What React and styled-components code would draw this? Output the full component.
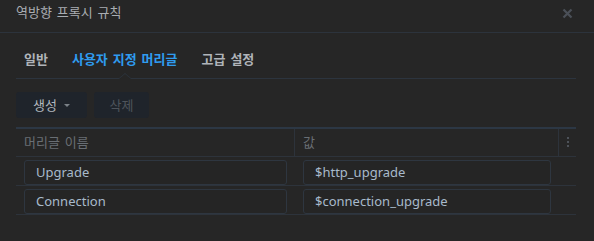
import React, { useState } from 'react';
import styled, { createGlobalStyle } from 'styled-components';

const GlobalStyle = createGlobalStyle`
  html, body {
    margin: 0;
    padding: 0;
    background: #262626;
  }
  body {
    font-family: "Noto Sans CJK KR", "Noto Sans", sans-serif;
    -webkit-font-smoothing: antialiased;
  }
  * { box-sizing: border-box; }
`;

const Dialog = styled.div`
  width: 594px;
  height: 241px;
  background: #262626;
  display: flex;
  flex-direction: column;
`;

const Header = styled.div`
  height: 33px;
  display: flex;
  justify-content: space-between;
  align-items: flex-start;
  padding: 3px 21px 0 16px;
  border-bottom: 1px solid #2c333c;
`;

const Title = styled.div`
  font-size: 13px;
  line-height: 18px;
  word-spacing: 2px;
  color: #a9adb2;
`;

const CloseButton = styled.button`
  border: 0;
  background: transparent;
  padding: 0;
  margin-top: 5px;
  width: 11px;
  height: 11px;
  display: flex;
  cursor: pointer;
`;

const Body = styled.div`
  padding: 0 18px 0 16px;
  display: flex;
  flex-direction: column;
`;

const TabBar = styled.div`
  height: 46px;
  display: flex;
  align-items: flex-end;
  padding-left: 8px;
  gap: 24px;
  border-bottom: 1px solid #2c343e;
`;

const Tab = styled.div`
  position: relative;
  font-size: 13px;
  font-weight: 700;
  line-height: 18px;
  word-spacing: 2px;
  padding-bottom: 10px;
  color: ${(p) => (p.active ? '#2f9cf0' : '#b0b4b9')};
  cursor: pointer;

  ${(p) => p.active && `
    &::before, &::after {
      content: '';
      position: absolute;
      left: 50%;
      width: 0;
      height: 0;
      border-style: solid;
      transform: translateX(-50%);
    }
    &::before {
      bottom: -1px;
      border-width: 0 7px 6px 7px;
      border-color: transparent transparent #2c343e transparent;
    }
    &::after {
      bottom: -1px;
      border-width: 0 6px 5px 6px;
      border-color: transparent transparent #262626 transparent;
    }
  `}
`;

const Toolbar = styled.div`
  display: flex;
  gap: 7px;
  margin-top: 13px;
`;

const ToolButton = styled.button`
  height: 26px;
  width: ${(p) => p.w}px;
  border: 0;
  border-radius: 3px;
  background: #1f242b;
  color: ${(p) => (p.disabled ? '#4e545b' : '#b2b8be')};
  font-family: inherit;
  font-size: 13px;
  display: flex;
  align-items: center;
  justify-content: center;
  gap: 7px;
  padding: 0 0 1px 0;
  cursor: ${(p) => (p.disabled ? 'default' : 'pointer')};
`;

const Caret = styled.span`
  width: 0;
  height: 0;
  border-style: solid;
  border-width: 3px 3px 0 3px;
  border-color: #7b8187 transparent transparent transparent;
  margin-top: 2px;
`;

const Table = styled.div`
  margin-top: 9px;
  border-top: 2px solid #2c3744;
  width: 560px;
`;

const Row = styled.div`
  display: grid;
  grid-template-columns: 279px 264px 17px;
  height: ${(p) => (p.head ? 28 : 29)}px;
  border-bottom: 1px solid #2d333b;
`;

const HeadCell = styled.div`
  display: flex;
  align-items: center;
  padding-left: 8px;
  padding-bottom: 2px;
  font-size: 13px;
  word-spacing: 2px;
  color: #696e74;
  border-right: 1px solid #2d333b;
`;

const Cell = styled.div`
  padding: 1px 8px 0 8px;
`;

const TextInput = styled.input`
  width: 100%;
  height: 25px;
  border: 1px solid #2e3640;
  border-radius: 3px;
  background: #252525;
  color: #a8bacb;
  font-family: "Noto Sans", sans-serif;
  font-size: 13px;
  padding: 0 0 1px 11px;
  outline: none;
`;

const Kebab = styled.div`
  display: flex;
  flex-direction: column;
  align-items: center;
  justify-content: center;
  gap: 2px;
  padding-bottom: 2px;
  span {
    width: 2px;
    height: 2px;
    background: #4d5259;
  }
`;

const headers = [
  { key: 'Upgrade', value: '$http_upgrade' },
  { key: 'Connection', value: '$connection_upgrade' },
];

const tabs = ['일반', '사용자 지정 머리글', '고급 설정'];

const App = () => {
  const [activeTab, setActiveTab] = useState(1);
  const [rows, setRows] = useState(headers);

  const updateRow = (index, field, val) => {
    const next = rows.map((r, i) => (i === index ? { ...r, [field]: val } : r));
    setRows(next);
  };

  return (
    <>
      <GlobalStyle />
      <Dialog>
        <Header>
          <Title>역방향 프록시 규칙</Title>
          <CloseButton aria-label="close">
            <svg width="11" height="11" viewBox="0 0 11 11">
              <path d="M1.5 1.5 L9.5 9.5 M9.5 1.5 L1.5 9.5" stroke="#4b5058" strokeWidth="2.2" />
            </svg>
          </CloseButton>
        </Header>
        <Body>
          <TabBar>
            {tabs.map((t, i) => (
              <Tab key={t} active={activeTab === i} onClick={() => setActiveTab(i)}>
                {t}
              </Tab>
            ))}
          </TabBar>
          <Toolbar>
            <ToolButton w={71}>
              생성 <Caret />
            </ToolButton>
            <ToolButton w={55} disabled>
              삭제
            </ToolButton>
          </Toolbar>
          <Table>
            <Row head>
              <HeadCell>머리글 이름</HeadCell>
              <HeadCell>값</HeadCell>
              <Kebab>
                <span />
                <span />
                <span />
              </Kebab>
            </Row>
            {rows.map((r, i) => (
              <Row key={i}>
                <Cell>
                  <TextInput value={r.key} onChange={(e) => updateRow(i, 'key', e.target.value)} />
                </Cell>
                <Cell>
                  <TextInput value={r.value} onChange={(e) => updateRow(i, 'value', e.target.value)} />
                </Cell>
                <div />
              </Row>
            ))}
          </Table>
        </Body>
      </Dialog>
    </>
  );
};

export default App;
